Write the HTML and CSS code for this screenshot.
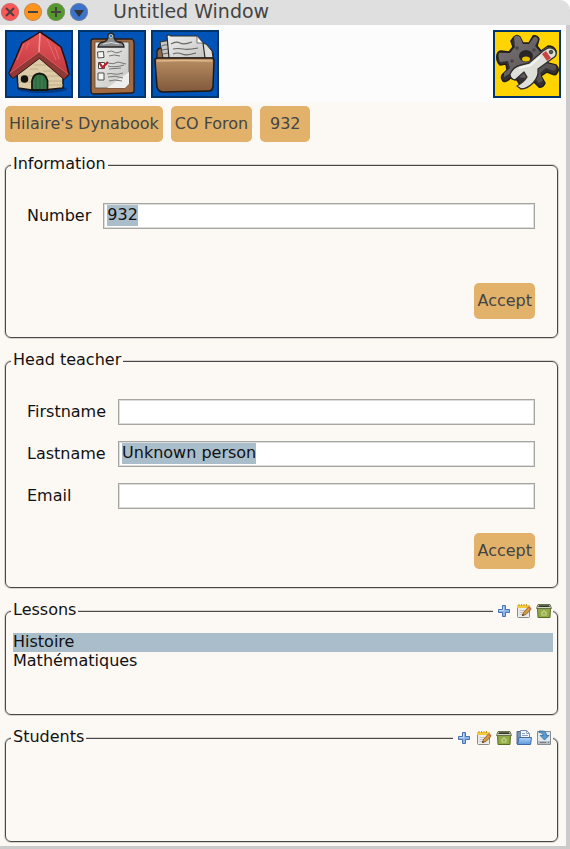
FILE: index.html
```html
<!DOCTYPE html>
<html lang="en">
<head>
<meta charset="utf-8">
<meta name="viewport" content="width=device-width, initial-scale=1">
<title>Untitled Window</title>
<link rel="stylesheet" href="styles.css">
</head>
<body>
<svg class="sprite" aria-hidden="true">
  <defs>
    <linearGradient id="roof" x1="0" y1="0" x2="0" y2="1"><stop offset="0" stop-color="#e8575c"/><stop offset="1" stop-color="#b9343b"/></linearGradient>
    <linearGradient id="leather" x1="0" y1="0" x2="0" y2="1"><stop offset="0" stop-color="#b98f63"/><stop offset="1" stop-color="#80583b"/></linearGradient>
    <linearGradient id="steel" x1="0" y1="0" x2="1" y2="1"><stop offset="0" stop-color="#7b7577"/><stop offset="1" stop-color="#4c484a"/></linearGradient>
    <linearGradient id="sheet" x1="0" y1="0" x2="1" y2="1"><stop offset="0" stop-color="#f0f0ee"/><stop offset="1" stop-color="#c4c4c2"/></linearGradient>
    <linearGradient id="blue" x1="0" y1="0" x2="0" y2="1"><stop offset="0" stop-color="#b4d4f5"/><stop offset="1" stop-color="#5c97dc"/></linearGradient>
  </defs>
  <symbol id="add" viewBox="0 0 16 16">
    <path d="M6.5 2.5h3v4h4v3h-4v4h-3v-4h-4v-3h4z" fill="#8fb5e6" stroke="#4a72b0" stroke-linejoin="round"/>
    <path d="M7.5 3.5v4h-4" fill="none" stroke="#c3dbf5"/>
  </symbol>
  <symbol id="edit" viewBox="0 0 16 16">
    <rect x="1.5" y="2.5" width="12" height="12" rx="1" fill="#ececea" stroke="#8b8b86"/>
    <path d="M1 2h13v3H1z" fill="#f3ca3e"/>
    <path d="M3 1v2M5.5 1v2M8 1v2M10.500 1v2" stroke="#c89a20"/>
    <path d="M3.500 7.500h6M3.500 9.500h4M3.500 11.500h3" stroke="#c2c2bf"/>
    <path d="M6.500 12.500l1-3 5-5.500 2.500 2.300-5 5.200z" fill="#d99a3f" stroke="#7b5223" stroke-width=".8"/>
    <path d="M12 4.500l1.300-1.300 2.300 2.200-1.200 1.200z" fill="#d66a45"/>
    <path d="M6.200 12.900l.5-1.800 1.300 1.200z" fill="#222"/>
  </symbol>
  <symbol id="bin" viewBox="0 0 16 16">
    <path d="M1.500 5h13l-.5 9.500H2z" fill="#93aa49" stroke="#5a6d25"/>
    <path d="M2 1.500h12l1.500 4H.5z" fill="#d0d7bd" stroke="#66734b"/>
    <path d="M3 2.300h10l.8 1.700H2.200z" fill="#34382c"/>
    <path d="M6 12V9.500L8 8l2 1.500V12z" fill="none" stroke="#c6d98a" stroke-width="1.200"/>
  </symbol>
  <symbol id="folder" viewBox="0 0 16 16">
    <path d="M1 1.500h5l1 1.500v11H1z" fill="#7b93b5" stroke="#54698b"/>
    <path d="M4.500.5h6l3 3v6h-9z" fill="#f5f8fc" stroke="#748baa"/>
    <path d="M10.500.5v3h3M6 3.500h3M6 5.500h6" fill="none" stroke="#91a2ba"/>
    <path d="M3 7.500h12.500l-1 7H1.500z" fill="url(#blue)" stroke="#3c6ba8" stroke-linejoin="round"/>
  </symbol>
  <symbol id="save" viewBox="0 0 16 16">
    <path d="M1.500 1.500h13v13h-13z" fill="#e5e8ea" stroke="#858d92"/>
    <path d="M2 11h12v3H2z" fill="#b7bdc0"/>
    <path d="M4 12.500h6M12 12.500h1" stroke="#717a80"/>
    <path d="M3 1h3.500C9.500 1 10.500 3 10.500 5.500H13L8.500 10 4.200 5.500H7C7 3.500 5.500 2.500 3 2.500z" fill="#599bce" stroke="#2d6b9f" stroke-width=".8"/>
  </symbol>
</svg>

<div class="window">
  <header class="titlebar">
    <button class="dot dot-close" aria-label="Close"><svg viewBox="0 0 18 18"><path d="M5 5l8 8M13 5l-8 8"/></svg></button>
    <button class="dot dot-collapse" aria-label="Collapse"><svg viewBox="0 0 18 18"><path d="M4 9h10"/></svg></button>
    <button class="dot dot-expand" aria-label="Expand"><svg viewBox="0 0 18 18"><path d="M4 9h10M9 4v10"/></svg></button>
    <button class="dot dot-menu" aria-label="Window menu"><svg viewBox="0 0 18 18"><path class="solid" d="M4 7h10L9 14z"/></svg></button>
    <h1 class="title">Untitled Window</h1>
  </header>

  <div class="body">
    <nav class="toolbar" aria-label="Tools">
      <button class="tool" aria-label="Home">
        <svg viewBox="0 0 68 68">
          <ellipse cx="37" cy="59" rx="25" ry="4" fill="#003a86"/>
          <path d="M12 43L35 23 58 44 58 58 43 59.500 27 60 13 58z" fill="#dccba6" stroke="#191512" stroke-width="1.500" stroke-linejoin="round"/>
          <path d="M13 52h14M42 51h15M42 55h16M15 46h13M41 46h14M25 39h8M38 41h14M29 35h14" stroke="#c0ae8a" fill="none"/>
          <path d="M27 60V51Q28 44 34.500 43.500 41 44 42.500 51V60z" fill="#39784a" stroke="#14170f" stroke-width="1.800"/>
          <path d="M31 46v13M35 45v14M39 46v13" stroke="#2a6439"/>
          <circle cx="19.500" cy="49" r="3.800" fill="#16120f"/>
          <path d="M35 2Q46 9 56 17Q61 30 64 44Q62 47 59 49L34.500 28 8 48Q5 46 4 43Q11 28 17 13Q26 8 35 2z" fill="url(#roof)" stroke="#260f10" stroke-width="1.500" stroke-linejoin="round"/>
          <path d="M34 22L4 43 8 48 34.500 28 59 49 64 44z" fill="#8f3835"/>
          <path d="M35 3L34 22" fill="none" stroke="#f4a09b" stroke-width="1.500"/>
          <path d="M34 22L63 44M34 22L5 43" fill="none" stroke="#d8605f"/>
          <path d="M19 14L12 30M42 9L51 30M24 12L21 19M50 17L54 29" fill="none" stroke="#e56a6c"/>
        </svg>
      </button>
      <button class="tool" aria-label="Checklist">
        <svg viewBox="0 0 68 68">
          <path d="M15 9L54 9Q56 10 56 13L56 61Q56 63 53 63L15 64Q13 63 13 61L13 12Q13 9 15 9z" fill="#a36b43" stroke="#2b1a12" stroke-width="1.300"/>
          <path d="M17 12H51L51 54 47 58 17 58z" fill="url(#sheet)" stroke="#51483f" stroke-width=".8"/>
          <path d="M51 42L29 58H47L51 54z" fill="#eeeeec"/>
          <path d="M20 17Q21 12 26 12Q29 11 30 8Q29 4 33 3Q37 4 36 8Q37 11 40 12Q46 12 46 17z" fill="#8c8e90" stroke="#252525" stroke-width="1.300"/>
          <circle cx="33" cy="6" r="1.500" fill="#0054b8" stroke="#ddd" stroke-width=".7"/>
          <path d="M25 14q8-3 16 0" fill="none" stroke="#dedede"/>
          <path d="M19.500 22l6-.5.5 6-6 .5zM20.500 32.500h6v6h-6zM20 43h6v7h-6z" fill="#f6f6f4" stroke="#4c4c4c"/>
          <path d="M21.500 33l3 4.500L30 32" fill="none" stroke="#bd202b" stroke-width="2.200"/>
          <path d="M29 22q5-2 7 0t8-1M31 26q5-2 11 0M30 33q5 2 10-1l8 2M30 36q6 2 16-1M31 39l12-1M29 44q4-1 7 0t9-1M30 47q7-2 15 1M31 51q5-2 13 0" fill="none" stroke="#777" stroke-width="1"/>
        </svg>
      </button>
      <button class="tool" aria-label="Documents">
        <svg viewBox="0 0 68 68">
          <path d="M6 30L6 21Q7 18 10 18L57 18Q61 19 62 24V31z" fill="#8b684a" stroke="#221710" stroke-width="1.300"/>
          <path d="M9 12L20 10 24 28H12z" fill="#c8c8c6" stroke="#30302e"/>
          <path d="M11 16q3-2 6-1M11 20l6-1M12 24l5-1" stroke="#626262" fill="none"/>
          <path d="M49 13L55 14 61 21 62 28H52z" fill="#dededc" stroke="#30302e"/>
          <path d="M16 6Q17 4 20 6L46 6 52 13 54 28H18z" fill="url(#sheet)" stroke="#2d2d2b" stroke-width="1.200"/>
          <path d="M46 6L46 13 52 13z" fill="#fff" stroke="#555" stroke-width=".8"/>
          <path d="M20 14q5-3 9-1t12-1M22 19q5-1 10 0t15-1M22 24q4-2 9 0t14-1" fill="none" stroke="#666" stroke-width="1.200"/>
          <path d="M4 30Q4 28 7 28L61 28Q63 28 63 31L62 57Q61 61 58 61L11 62Q7 61 6 57z" fill="url(#leather)" stroke="#211610" stroke-width="1.500"/>
          <path d="M6 31Q31 30 61 31" fill="none" stroke="#deb98c" stroke-width="1.500"/>
        </svg>
      </button>
      <button class="tool tool-settings" aria-label="Settings">
        <svg viewBox="0 0 68 68">
          <path d="M21 7Q24 4 27 7L30 13 36 13 40 6Q44 5 46 9L44 16 48 21 55 16Q61 16 63 21Q63 25 60 26L54 28 55 33 63 35Q67 39 64 43Q62 46 59 44L54 42 48 46 52 53Q50 58 46 57L40 51 33 53 29 58 24 50 17 48Q14 53 10 51Q7 47 10 44L14 40 13 34 7 35Q3 31 4 25Q5 21 8 21L16 22 20 17 18 11z" fill="#343032" stroke="#1f1c1c" stroke-width="1.500" stroke-linejoin="round"/>
          <path d="M21 7Q24 4 27 7L30 14 36 14 41 7Q44 6 45 10L42 16 47 22 54 17Q59 17 62 20L60 23 52 26 53 33 62 35Q65 38 61 41L53 38 47 43 50 51 46 53 40 46 31 48 25 47 18 43 11 47 11 43 17 38 15 31 7 32Q5 28 6 23L17 23 22 17z" fill="url(#steel)"/>
          <g fill="#494446"><circle cx="24" cy="18" r="1.800"/><circle cx="41" cy="20" r="1.800"/><circle cx="19" cy="31" r="1.800"/><circle cx="23" cy="39" r="1.800"/></g>
          <ellipse cx="33" cy="26" rx="7" ry="6" fill="#292626"/>
          <ellipse cx="33" cy="29" rx="4" ry="2.500" fill="#e8c200"/>
          <path d="M50 21L55 18Q61 17 63 22Q64 26 60 28L45 39Q46 47 40 53Q34 59 28 59L24 56Q31 52 34 47L31 42 22 50Q17 49 17 44Q20 37 28 35L36 33z" fill="#dedfd9" stroke="#302c2c" stroke-width="1.300" stroke-linejoin="round"/>
          <path d="M49 24l4-3 5 7-4 3z" fill="#c94343"/>
          <path d="M47 27L38 35 26 38" fill="none" stroke="#f3f3f0" stroke-width="2"/>
          <circle cx="58" cy="22" r="1.800" fill="#555" stroke="#222" stroke-width=".7"/>
        </svg>
      </button>
    </nav>

    <nav class="crumbs" aria-label="Path">
      <button class="btn">Hilaire's Dynabook</button>
      <button class="btn">CO Foron</button>
      <button class="btn">932</button>
    </nav>

    <main class="panels">
      <section class="panel">
        <header class="panel-head"><h2 class="panel-title">Information</h2></header>
        <form class="form">
          <div class="fields">
            <label for="number">Number</label>
            <div class="field"><input class="selected" id="number" type="text" value="932"></div>
          </div>
          <button class="btn btn-submit" type="button">Accept</button>
        </form>
      </section>

      <section class="panel">
        <header class="panel-head"><h2 class="panel-title">Head teacher</h2></header>
        <form class="form">
          <div class="fields">
            <label for="firstname">Firstname</label>
            <div class="field"><input id="firstname" type="text"></div>
            <label for="lastname">Lastname</label>
            <div class="field"><input class="selected" id="lastname" type="text" value="Unknown person"></div>
            <label for="email">Email</label>
            <div class="field"><input id="email" type="text"></div>
          </div>
          <button class="btn btn-submit" type="button">Accept</button>
        </form>
      </section>

      <section class="panel panel-list">
        <header class="panel-head">
          <h2 class="panel-title">Lessons</h2>
          <div class="actions">
            <button class="action" aria-label="Add lesson"><svg><use href="#add"/></svg></button>
            <button class="action" aria-label="Edit lesson"><svg><use href="#edit"/></svg></button>
            <button class="action" aria-label="Delete lesson"><svg><use href="#bin"/></svg></button>
          </div>
        </header>
        <ul class="list">
          <li><button class="item item-current">Histoire</button></li>
          <li><button class="item">Mathématiques</button></li>
        </ul>
      </section>

      <section class="panel panel-list">
        <header class="panel-head">
          <h2 class="panel-title">Students</h2>
          <div class="actions">
            <button class="action" aria-label="Add student"><svg><use href="#add"/></svg></button>
            <button class="action" aria-label="Edit student"><svg><use href="#edit"/></svg></button>
            <button class="action" aria-label="Delete student"><svg><use href="#bin"/></svg></button>
            <button class="action" aria-label="Open file"><svg><use href="#folder"/></svg></button>
            <button class="action" aria-label="Import"><svg><use href="#save"/></svg></button>
          </div>
        </header>
        <ul class="list"></ul>
      </section>
    </main>
  </div>
</div>
</body>
</html>
```

FILE: styles.css
```css
* {
  box-sizing: border-box;
}

body {
  margin: 0;
  background: #fcfcfc;
  color: #111;
  font: 16px/20px "DejaVu Sans", sans-serif;
}

button,
input {
  margin: 0;
  padding: 0;
  border: 0;
  background: none;
  color: inherit;
  font: inherit;
}

h1,
h2,
ul {
  margin: 0;
  padding: 0;
  font-weight: normal;
  list-style: none;
}

svg {
  display: block;
  width: 100%;
  height: 100%;
}

.sprite {
  position: absolute;
  width: 0;
  height: 0;
}

.window {
  display: flex;
  flex-direction: column;
  min-height: 100vh;
}

.titlebar {
  display: flex;
  align-items: flex-start;
  gap: 5px;
  height: 25px;
  padding: 3px 0 0 1px;
  border-top-right-radius: 10px;
  background: #dfdfdf;
}

.dot {
  width: 18px;
  height: 18px;
  border-radius: 50%;
  box-shadow: inset 0 0 0 1px #8888;
}

.dot path {
  fill: none;
  stroke: #444;
  stroke-width: 2;
}

.dot .solid {
  fill: #333;
  stroke: none;
}

.dot-close { background: #ff5555; }
.dot-collapse { background: #ff931e; }
.dot-expand { background: #55992b; }
.dot-menu { background: #3b73cb; }

.title {
  margin: -3px 0 0 20px;
  color: #444;
  font-size: 19px;
  line-height: 22px;
}

.body {
  flex: 1;
  border: solid #cbcbcb;
  border-width: 0 4px 3px 0;
  background: #fcf8f3;
}

.toolbar {
  display: flex;
  gap: 5px;
  padding: 5px 5px 4px;
  background: #fcfcfc;
}

.tool {
  width: 68px;
  height: 68px;
  background: #0054b8;
  box-shadow: inset 0 0 0 2px #00346a;
}

.tool-settings {
  margin-left: auto;
  background: #ffd400;
}

.crumbs {
  display: flex;
  gap: 8px;
  padding: 4px 5px 0;
}

.btn {
  min-width: 50px;
  height: 36px;
  padding: 0 4px;
  border-radius: 5px;
  background: #e2b26b;
  color: #444;
}

.btn-submit {
  padding: 0 3px;
}

.panels {
  display: grid;
  gap: 23px;
  padding: 23px 8px 4px 5px;
}

.panel {
  border: 1px solid #484848;
  border-radius: 6px;
  box-shadow: 0 0 0 1px #48484833;
}

.panel-head {
  display: flex;
  align-items: flex-start;
  justify-content: space-between;
  height: 24px;
  margin-top: -13px;
  padding: 0 4px 0 5px;
}

.panel-title {
  padding: 0 2px;
  background: #fcf8f3;
  font-size: 16px;
  line-height: 22px;
}

.actions {
  display: flex;
  align-items: center;
  gap: 4px;
  height: 24px;
  padding: 0 1px 0 3px;
  background: #fcf8f3;
}

.action {
  width: 16px;
  height: 16px;
}

.form {
  display: flex;
  flex-direction: column;
  align-items: flex-end;
  gap: 24px;
  padding: 26px 22px 18px 21px;
}

.fields {
  display: grid;
  grid-template-columns: auto 1fr;
  align-content: start;
  gap: 16px 12px;
  width: 100%;
  min-height: 56px;
}

.fields label {
  line-height: 26px;
}

.field {
  display: flex;
  height: 26px;
  padding: 1px 3px;
  border: 1px solid #a5a5a1;
  box-shadow: inset 0 0 0 1px #ddd;
  background: #fff;
}

.field input {
  flex: 1;
  height: 21px;
  padding-bottom: 3px;
  line-height: 18px;
  outline: 0;
}

.field .selected {
  flex: none;
  field-sizing: content;
  background: #a9bdcb;
}

.panel-list {
  min-height: 104px;
}

.list {
  padding: 10px 4px 0 7px;
}

.item {
  display: block;
  width: 100%;
  height: 19px;
  padding-bottom: 2px;
  line-height: 17px;
  text-align: left;
}

.item-current {
  background: #a9bdcb;
}
```
